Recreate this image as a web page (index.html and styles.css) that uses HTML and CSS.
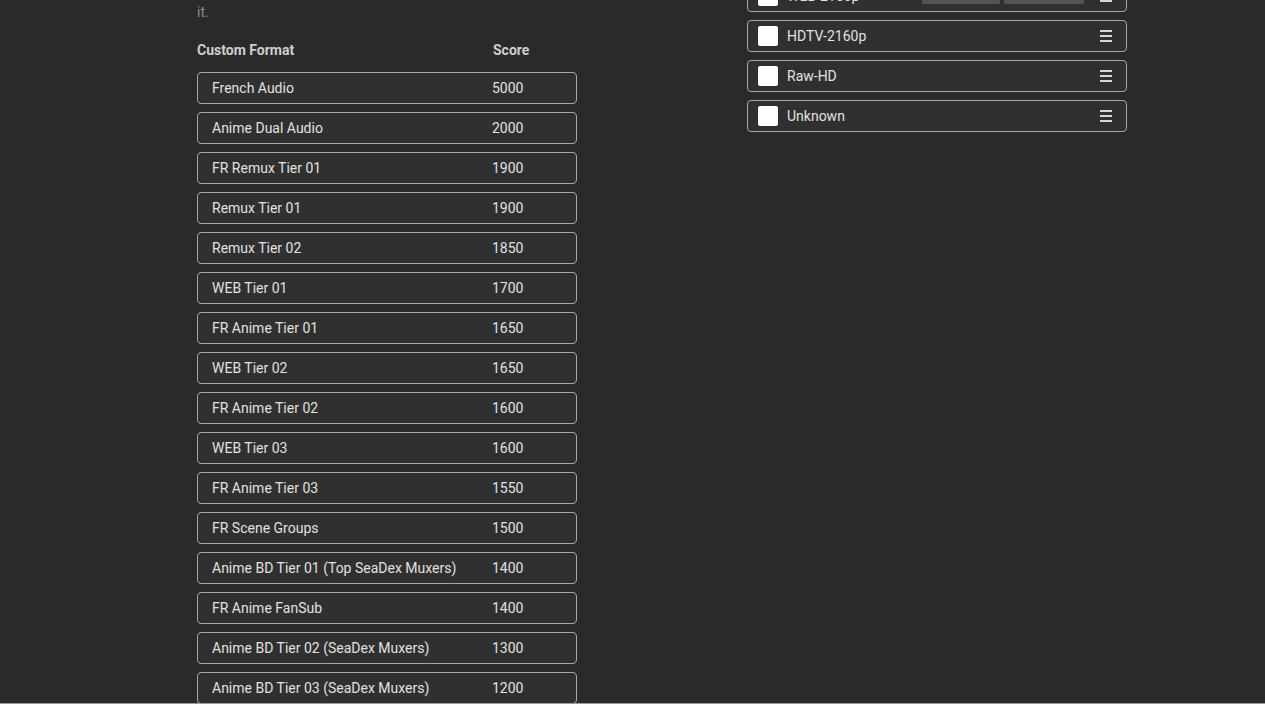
FILE: index.html
```html
<!DOCTYPE html>
<html lang="en">
<head>
  <meta charset="UTF-8">
  <meta name="viewport" content="width=device-width, initial-scale=1.0">
  <title>Quality Profile</title>
  <link rel="stylesheet" href="styles.css">
</head>
<body>
  <div class="page">
    <div class="columns">
      <section class="formats">
        <p class="hint">it.</p>
        <div class="format-head">
          <div>Custom Format</div>
          <div>Score</div>
        </div>
        <div class="format-list">
          <div class="format-row"><div>French Audio</div><div>5000</div></div>
          <div class="format-row"><div>Anime Dual Audio</div><div>2000</div></div>
          <div class="format-row"><div>FR Remux Tier 01</div><div>1900</div></div>
          <div class="format-row"><div>Remux Tier 01</div><div>1900</div></div>
          <div class="format-row"><div>Remux Tier 02</div><div>1850</div></div>
          <div class="format-row"><div>WEB Tier 01</div><div>1700</div></div>
          <div class="format-row"><div>FR Anime Tier 01</div><div>1650</div></div>
          <div class="format-row"><div>WEB Tier 02</div><div>1650</div></div>
          <div class="format-row"><div>FR Anime Tier 02</div><div>1600</div></div>
          <div class="format-row"><div>WEB Tier 03</div><div>1600</div></div>
          <div class="format-row"><div>FR Anime Tier 03</div><div>1550</div></div>
          <div class="format-row"><div>FR Scene Groups</div><div>1500</div></div>
          <div class="format-row"><div>Anime BD Tier 01 (Top SeaDex Muxers)</div><div>1400</div></div>
          <div class="format-row"><div>FR Anime FanSub</div><div>1400</div></div>
          <div class="format-row"><div>Anime BD Tier 02 (SeaDex Muxers)</div><div>1300</div></div>
          <div class="format-row"><div>Anime BD Tier 03 (SeaDex Muxers)</div><div>1200</div></div>
        </div>
      </section>

      <section class="qualities">
        <div class="quality-row">
          <span class="check"></span>
          <span class="quality-name">WEB-2160p</span>
          <span class="tags"><span class="tag">WEBDL-2160p</span><span class="tag">WEBRip-2160p</span></span>
          <span class="drag"><i></i><i></i><i></i></span>
        </div>
        <div class="quality-row">
          <span class="check"></span>
          <span class="quality-name">HDTV-2160p</span>
          <span class="drag"><i></i><i></i><i></i></span>
        </div>
        <div class="quality-row">
          <span class="check"></span>
          <span class="quality-name">Raw-HD</span>
          <span class="drag"><i></i><i></i><i></i></span>
        </div>
        <div class="quality-row">
          <span class="check"></span>
          <span class="quality-name">Unknown</span>
          <span class="drag"><i></i><i></i><i></i></span>
        </div>
      </section>
    </div>
  </div>
</body>
</html>
```

FILE: styles.css
```css
body {
    margin: 0;
    font-family: Roboto, "Liberation Sans", Arial, sans-serif;
    font-size: 14px;
    background-color: #2a2a2a;
    color: #e1e1e1;
}

.page {
    box-sizing: border-box;
    height: 704px;
    overflow: hidden;
    border-bottom: 1px solid #9c9c9c;
}

.columns {
    display: grid;
    grid-template-columns: 380px 380px;
    column-gap: 170px;
    padding-left: 197px;
    align-items: start;
}

.hint {
    margin: 4px 0 0;
    line-height: 17px;
    color: #8a8a8a;
}

.format-head {
    display: grid;
    grid-template-columns: 296px 1fr;
    margin-top: 21px;
    line-height: 17px;
    font-weight: bold;
    color: #cfcfcf;
}

.format-list {
    display: flex;
    flex-direction: column;
    gap: 8px;
    margin-top: 13px;
}

.format-row {
    box-sizing: border-box;
    display: grid;
    grid-template-columns: 280px 1fr;
    align-items: center;
    height: 32px;
    padding: 0 14px;
    border: 1px solid #a7a7a7;
    border-radius: 4px;
    background-color: #303030;
}

.qualities {
    display: flex;
    flex-direction: column;
    gap: 8px;
    margin-top: -20px;
}

.quality-row {
    box-sizing: border-box;
    display: flex;
    align-items: center;
    height: 32px;
    padding: 0 14px 0 10px;
    border: 1px solid #a7a7a7;
    border-radius: 4px;
    background-color: #303030;
}

.check {
    width: 20px;
    height: 20px;
    border-radius: 2px;
    background-color: #fff;
}

.quality-name {
    margin-left: 9px;
    flex: 1;
}

.tags {
    display: flex;
    gap: 4px;
    margin-right: 16px;
    align-self: flex-start;
    margin-top: 4px;
}

.tag {
    box-sizing: border-box;
    height: 19px;
    padding: 0 6px;
    overflow: hidden;
    white-space: nowrap;
    border-radius: 2px;
    background-color: #555;
    color: #e1e1e1;
    font-size: 12px;
    line-height: 14px;
}

.tag:first-child {
    width: 78px;
}

.tag:last-child {
    width: 80px;
}

.drag {
    display: flex;
    flex-direction: column;
    gap: 3px;
    width: 12px;
}

.drag i {
    display: block;
    height: 2px;
    background-color: #d6d6d6;
}
```
